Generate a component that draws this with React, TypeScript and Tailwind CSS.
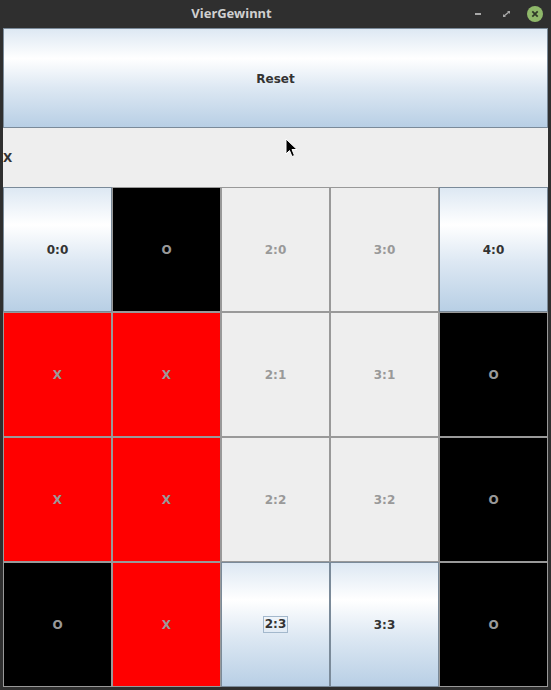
import React from "react";

type Cell = {
  label: string;
  kind: "active" | "off" | "black" | "red";
  focus?: boolean;
};

// 5 columns x 4 rows, row by row
const cells: Cell[] = [
  { label: "0:0", kind: "active" },
  { label: "O", kind: "black" },
  { label: "2:0", kind: "off" },
  { label: "3:0", kind: "off" },
  { label: "4:0", kind: "active" },

  { label: "X", kind: "red" },
  { label: "X", kind: "red" },
  { label: "2:1", kind: "off" },
  { label: "3:1", kind: "off" },
  { label: "O", kind: "black" },

  { label: "X", kind: "red" },
  { label: "X", kind: "red" },
  { label: "2:2", kind: "off" },
  { label: "3:2", kind: "off" },
  { label: "O", kind: "black" },

  { label: "O", kind: "black" },
  { label: "X", kind: "red" },
  { label: "2:3", kind: "active", focus: true },
  { label: "3:3", kind: "active" },
  { label: "O", kind: "black" },
];

const oceanGradient =
  "bg-[linear-gradient(to_bottom,#dde8f3_0%,#ffffff_30%,#dde8f3_60%,#b8cfe5_100%)]";

const kindClass = {
  active: `${oceanGradient} border-[#7a8a99] text-[#333333]`,
  off: "bg-[#eeeeee] border-[#999999] text-[#999999]",
  black: "bg-black border-[#999999] text-[#999999]",
  red: "bg-[#ff0000] border-[#999999] text-[#999999]",
};

const GridButton = ({ cell }: { cell: Cell }) => (
  <div
    className={`flex items-center justify-center border ${kindClass[cell.kind]}`}
  >
    {cell.focus ? (
      <span className="border border-[#a3b8cc] px-px leading-[15px]">{cell.label}</span>
    ) : (
      <span>{cell.label}</span>
    )}
  </div>
);

const TitleBar = () => (
  <div className="relative h-[28px] flex items-center justify-center">
    <span
      className="text-[13px] font-bold text-[#d0d0d0] pr-[88px]"
      style={{ fontFamily: '"Noto Sans", sans-serif' }}
    >
      VierGewinnt
    </span>
    <div className="absolute right-[8px] top-0 h-[28px] flex items-center gap-[14px]">
      <div className="w-[14px] h-[14px] flex items-center justify-center">
        <div className="w-[6px] h-[2px] bg-[#a8a8a8]" />
      </div>
      <svg width="14" height="14" viewBox="0 0 14 14">
        <path d="M8 4 L11 4 L11 7 Z" fill="#a8a8a8" />
        <path d="M4 7 L4 10 L7 10 Z" fill="#a8a8a8" />
        <path d="M5 9 L10 5" stroke="#a8a8a8" strokeWidth="1.4" />
      </svg>
      <svg width="16" height="16" viewBox="0 0 16 16">
        <circle cx="8" cy="8" r="8" fill="#8fb86a" />
        <path d="M5.3 5.3 L10.7 10.7 M10.7 5.3 L5.3 10.7" stroke="#2f3a28" strokeWidth="1.8" />
      </svg>
    </div>
  </div>
);

const App = () => {
  return (
    <div
      className="relative w-[551px] h-[690px] bg-[#2f2f2f] flex flex-col overflow-hidden"
      style={{ fontFamily: '"DejaVu Sans", sans-serif' }}
    >
      <TitleBar />
      <div className="mx-[3px] w-[545px] h-[659px] flex flex-col bg-[#eeeeee] text-[12px] font-bold">
        <div
          className={`h-[100px] pt-[2px] flex items-center justify-center border border-[#7a8a99] text-[#333333] ${oceanGradient}`}
        >
          Reset
        </div>
        <div className="h-[59px] flex items-center text-[#333333]">X</div>
        <div className="h-[500px] grid grid-cols-5 grid-rows-4">
          {cells.map((cell, i) => (
            <GridButton key={i} cell={cell} />
          ))}
        </div>
      </div>

      {/* mouse pointer */}
      <svg
        className="absolute left-[285px] top-[138px]"
        width="14"
        height="21"
        viewBox="0 0 14 21"
      >
        <path
          d="M1 1 L1 16 L4.5 12.5 L7 18.5 L9.5 17.5 L7 11.5 L12 11.5 Z"
          fill="#000000"
          stroke="#ffffff"
          strokeWidth="1"
          strokeLinejoin="round"
        />
      </svg>
    </div>
  );
};

export default App;
